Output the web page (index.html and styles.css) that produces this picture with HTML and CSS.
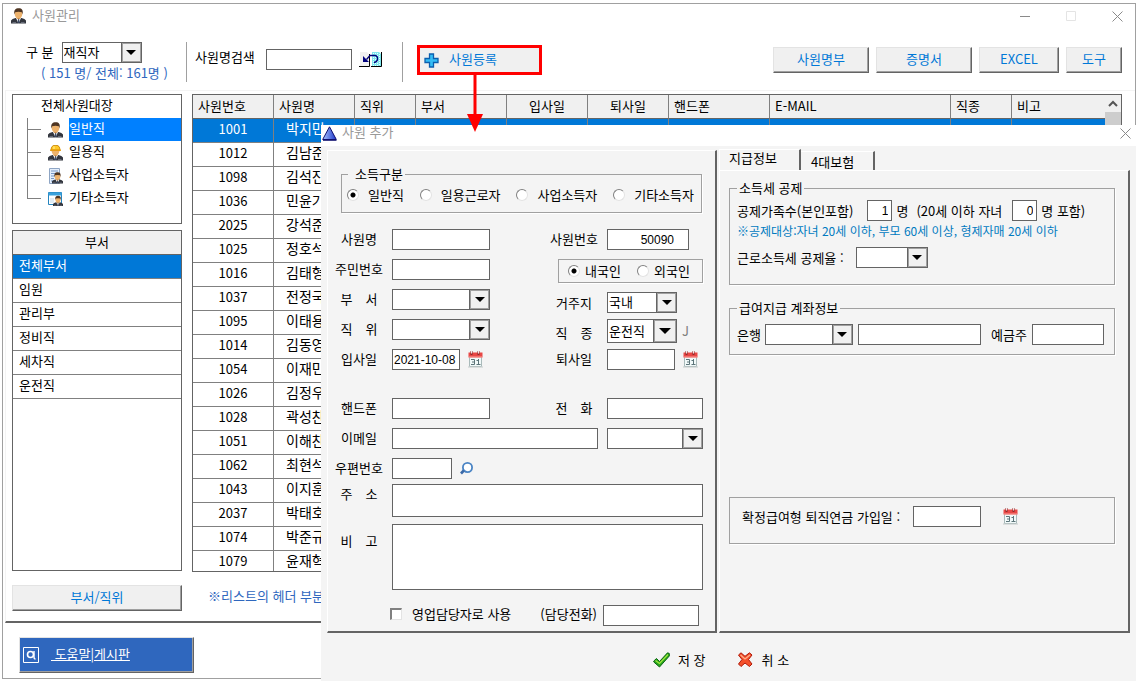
FILE: index.html
```html
<!DOCTYPE html>
<html lang="ko">
<head>
<meta charset="utf-8">
<title>사원관리</title>
<link rel="stylesheet" href="styles.css">
</head>
<body>
<svg class="sprites" aria-hidden="true">
  <symbol id="person" viewBox="0 0 15 16">
    <path d="M0 15.5V12.5Q1 10.8 4.5 10H10.5Q14 10.8 15 12.5V15.5Z" fill="#33363e"/>
    <path d="M5 10H10L7.5 15.5Z" fill="#fff"/>
    <path d="M7 11H8.2L8.6 15H6.6Z" fill="#3d4a66"/>
    <path d="M1.5 14.5H5M10 14.5H13.5" stroke="#666b78"/>
    <ellipse cx="7.5" cy="6" rx="3.8" ry="4.6" fill="#edb26c"/>
    <path d="M3.4 6.5C2.6 2 4.5.3 7.7.3S12.4 2 11.6 6.5L10.8 4.2Q7.5 3.3 4.2 4.2Z" fill="#4e3522"/>
    <path d="M5.5 10H9.5L7.5 11.6Z" fill="#c98b45"/>
  </symbol>
  <symbol id="worker" viewBox="0 0 15 16">
    <use href="#person"/>
    <path d="M3 5Q3 .2 7.5 .2T12 5Z" fill="#ffc928" stroke="#d68b00" stroke-width=".7"/>
    <path d="M2 5.2H13" stroke="#e79c10" stroke-width="1.4"/>
    <path d="M6 1.4V4" stroke="#fff0a0"/>
  </symbol>
  <symbol id="business" viewBox="0 0 15 16">
    <path d="M1.5.5H11.5V15.5H1.5Z" fill="#e4eefb" stroke="#8ea5c4"/>
    <path d="M3 3H10M3 5.5H10M3 8H7M3 10.500H6M3 13H6" stroke="#7797c5"/>
    <svg x="4" y="4" width="11" height="12"><use href="#person" width="11" height="12"/></svg>
  </symbol>
  <symbol id="other" viewBox="0 0 15 16">
    <path d="M.5 1.500H13.500V13.500H.5Z" fill="#fff" stroke="#2484bf"/>
    <path d="M.5 1.500H13.500V4.500H.5Z" fill="#3aa2dd"/>
    <path d="M2 7H6V12H2Z" fill="#e1edf5"/>
    <svg x="5" y="4" width="10" height="12"><use href="#person" width="10" height="12"/></svg>
  </symbol>
  <symbol id="calendar" viewBox="0 0 15 17">
    <path d="M1.500 5H13.500V15.500H1.500Z" fill="#f1f9f9" stroke="#a9baba"/>
    <path d="M.5 1.500H14.500V6.500H.5Z" fill="#e84745"/>
    <path d="M1 6H14" stroke="#f9a19c"/>
    <path d="M3.500 0V4M10.500 0V4" stroke="#8f2a2a" stroke-width="2"/>
    <path d="M3.500 0V2.500M10.500 0V2.500" stroke="#f3e6e6"/>
    <path d="M3 8.500H6.500V13.500H3M4 11H6.500M8.500 9.500H10.500M10.500 8V13.500M8.500 13.500H12.500" fill="none" stroke="#5c7479"/>
    <path d="M0 16H15" stroke="#c3caca"/>
  </symbol>
  <symbol id="close" viewBox="0 0 11 11">
    <path d="M.5 .5L10.500 10.500M10.500 .5L.5 10.500" stroke="#8a8a8a" fill="none"/>
  </symbol>
</svg>

<main class="window">
  <header class="titlebar">
    <svg class="icon-person"><use href="#person"/></svg>
    <h1 class="caption">사원관리</h1>
    <div class="window-controls">
      <button class="ctl" aria-label="최소화"><svg viewBox="0 0 11 11"><path d="M0 5.500H10" stroke="#8a8a8a"/></svg></button>
      <button class="ctl" aria-label="최대화" disabled><svg viewBox="0 0 11 11"><path d="M.5.5H9.500V9.500H.5Z" fill="none" stroke="#e4e4e4"/></svg></button>
      <button class="ctl" aria-label="닫기"><svg><use href="#close"/></svg></button>
    </div>
  </header>

  <div class="toolbar">
    <div class="filter">
      <div class="filter-row">
        <label for="status">구 분</label>
        <span class="combo combo-80"><select id="status"><option>재직자</option></select><i class="drop"></i></span>
      </div>
      <p class="count">( 151 명/ 전체: 161명 )</p>
    </div>
    <div class="search">
      <label for="find">사원명검색</label>
      <input id="find" class="field find-field" type="text">
      <button class="bare" aria-label="검색">
        <svg class="icon-find" viewBox="0 0 24 17">
          <path d="M1 1H8L10 3V15H1Z" fill="#f0f0f0"/><path d="M0 15.500H10.500V3" stroke="#000" fill="none"/>
          <path d="M13 1H20L22 3V15H13Z" fill="#7fe8ee"/><path d="M12 15.500H22.500V1" stroke="#000" fill="none"/>
          <path d="M14.500 2V15M16.500 2V15M18.500 2V15M20.500 3V15" stroke="#e8ffff" stroke-dasharray="1 1"/>
          <path d="M4 5V11H10Z" fill="#00007c"/><path d="M7.500 8.500L11 4.500H16Q19 5 18.500 8.500Q18 11 15 11.500" fill="none" stroke="#00007c" stroke-width="1.300"/>
        </svg>
      </button>
    </div>
    <div class="callout">
      <button class="register">
        <svg class="icon-plus" viewBox="0 0 15 15"><path d="M5.500 1H9.500V5.500H14V9.500H9.500V14H5.500V9.500H1V5.500H5.500Z" fill="#35bdf5" stroke="#0b5fae" stroke-width="1.300"/></svg>
        <span class="register-text">사원등록</span>
      </button>
      <svg class="arrow" viewBox="0 0 16 58" aria-hidden="true"><path d="M8 0V44" stroke="#f00" stroke-width="3"/><path d="M0 40H16L8 58Z" fill="#f00"/></svg>
    </div>
    <div class="actions">
      <button class="btn btn-96">사원명부</button>
      <button class="btn btn-96">증명서</button>
      <button class="btn btn-80">EXCEL</button>
      <button class="btn btn-56">도구</button>
    </div>
  </div>

  <section class="workspace">
    <aside class="side">
      <nav class="tree" aria-label="전체사원대장">
        <p class="tree-title">전체사원대장</p>
        <ul class="tree-list">
          <li><svg><use href="#person"/></svg><a class="selected" href="#">일반직</a></li>
          <li><svg><use href="#worker"/></svg><a href="#">일용직</a></li>
          <li><svg><use href="#business"/></svg><a href="#">사업소득자</a></li>
          <li><svg><use href="#other"/></svg><a href="#">기타소득자</a></li>
        </ul>
      </nav>
      <div class="departments">
        <table class="dept-table">
          <thead><tr><th>부서</th></tr></thead>
          <tbody>
            <tr class="current"><td>전체부서</td></tr>
            <tr><td>임원</td></tr>
            <tr><td>관리부</td></tr>
            <tr><td>정비직</td></tr>
            <tr><td>세차직</td></tr>
            <tr><td>운전직</td></tr>
          </tbody>
        </table>
      </div>
    </aside>

    <div class="list">
      <table class="list-table">
        <colgroup><col class="c81"><col class="c81"><col class="c61"><col class="c91"><col class="c81"><col class="c81"><col class="c101"><col><col class="c61"><col class="c93"></colgroup>
        <thead><tr><th>사원번호</th><th>사원명</th><th>직위</th><th>부서</th><th class="mid">입사일</th><th class="mid">퇴사일</th><th>핸드폰</th><th>E-MAIL</th><th>직종</th><th>비고</th></tr></thead>
        <tbody>
          <tr class="current"><td>1001</td><td>박지민</td><td></td><td></td><td></td><td></td><td></td><td></td><td></td><td></td></tr>
          <tr><td>1012</td><td>김남준</td><td></td><td></td><td></td><td></td><td></td><td></td><td></td><td></td></tr>
          <tr><td>1098</td><td>김석진</td><td></td><td></td><td></td><td></td><td></td><td></td><td></td><td></td></tr>
          <tr><td>1036</td><td>민윤기</td><td></td><td></td><td></td><td></td><td></td><td></td><td></td><td></td></tr>
          <tr><td>2025</td><td>강석준</td><td></td><td></td><td></td><td></td><td></td><td></td><td></td><td></td></tr>
          <tr><td>1025</td><td>정호석</td><td></td><td></td><td></td><td></td><td></td><td></td><td></td><td></td></tr>
          <tr><td>1016</td><td>김태형</td><td></td><td></td><td></td><td></td><td></td><td></td><td></td><td></td></tr>
          <tr><td>1037</td><td>전정국</td><td></td><td></td><td></td><td></td><td></td><td></td><td></td><td></td></tr>
          <tr><td>1095</td><td>이태용</td><td></td><td></td><td></td><td></td><td></td><td></td><td></td><td></td></tr>
          <tr><td>1014</td><td>김동영</td><td></td><td></td><td></td><td></td><td></td><td></td><td></td><td></td></tr>
          <tr><td>1054</td><td>이재민</td><td></td><td></td><td></td><td></td><td></td><td></td><td></td><td></td></tr>
          <tr><td>1026</td><td>김정우</td><td></td><td></td><td></td><td></td><td></td><td></td><td></td><td></td></tr>
          <tr><td>1028</td><td>곽성찬</td><td></td><td></td><td></td><td></td><td></td><td></td><td></td><td></td></tr>
          <tr><td>1051</td><td>이해찬</td><td></td><td></td><td></td><td></td><td></td><td></td><td></td><td></td></tr>
          <tr><td>1062</td><td>최현석</td><td></td><td></td><td></td><td></td><td></td><td></td><td></td><td></td></tr>
          <tr><td>1043</td><td>이지훈</td><td></td><td></td><td></td><td></td><td></td><td></td><td></td><td></td></tr>
          <tr><td>2037</td><td>박태호</td><td></td><td></td><td></td><td></td><td></td><td></td><td></td><td></td></tr>
          <tr><td>1074</td><td>박준규</td><td></td><td></td><td></td><td></td><td></td><td></td><td></td><td></td></tr>
          <tr><td>1079</td><td>윤재혁</td><td></td><td></td><td></td><td></td><td></td><td></td><td></td><td></td></tr>
        </tbody>
      </table>
      <div class="scrollbar">
        <svg viewBox="0 0 16 17"><path d="M4 11L8 7L12 11" fill="none" stroke="#555" stroke-width="2"/></svg>
        <span class="thumb"></span>
      </div>
    </div>

    <button class="btn">부서/직위</button>
    <p class="note">※리스트의 헤더 부분</p>
  </section>

  <footer class="footer">
    <button class="help">
      <svg class="icon-help" viewBox="0 0 16 16"><path d="M.5.5H15.500V15.500H.5Z" fill="none" stroke="#fff"/><circle cx="7.500" cy="7.500" r="3" fill="none" stroke="#fff" stroke-width="1.600"/><path d="M11 4V10Q11 12 12.500 12" fill="none" stroke="#fff" stroke-width="1.400"/></svg>
      <span class="help-text">&nbsp;도움말|게시판</span>
    </button>
  </footer>
</main>

<section class="dialog" role="dialog" aria-labelledby="dialog-title">
  <header class="dialog-title">
    <svg class="icon-app" viewBox="0 0 15 15"><defs><linearGradient id="g"><stop offset="0" stop-color="#a8c4ff"/><stop offset="1" stop-color="#1c35c8"/></linearGradient></defs><path d="M7.500 .8L14.300 13.500H.7Z" fill="url(#g)" stroke="#10106e"/><path d="M1 14.300H14.500" stroke="#10106e"/></svg>
    <h2 class="caption" id="dialog-title">사원 추가</h2>
    <button class="ctl dialog-close" aria-label="닫기"><svg><use href="#close"/></svg></button>
  </header>

  <form class="dialog-body">
    <div class="panel person-panel">
      <fieldset class="group income">
        <legend>소득구분</legend>
        <label><input type="radio" name="income" checked>일반직</label>
        <label><input type="radio" name="income">일용근로자</label>
        <label><input type="radio" name="income">사업소득자</label>
        <label><input type="radio" name="income">기타소득자</label>
      </fieldset>

      <div class="form form-tall">
        <label for="name">사원명</label><input id="name" class="field w98" type="text">
        <label for="no">사원번호</label><input id="no" class="field w82 num" type="text" value="50090">
        <label for="rrn">주민번호</label><input id="rrn" class="field w98" type="text">
        <div class="group nation" role="radiogroup" aria-label="국적">
          <label><input type="radio" name="nation" checked>내국인</label>
          <label><input type="radio" name="nation">외국인</label>
        </div>
        <label for="dept">부　서</label><span class="combo w98"><select id="dept"><option></option></select><i class="drop"></i></span>
        <label class="low" for="res">거주지</label><span class="combo w70 low"><select id="res"><option>국내</option></select><i class="drop"></i></span>
        <label for="rank">직　위</label><span class="combo w98"><select id="rank"><option></option></select><i class="drop"></i></span>
        <label class="low" for="job">직　종</label>
        <span class="inline job"><span class="combo combo-tall w70"><select id="job"><option>운전직</option></select><i class="drop"></i></span><span class="code">J</span></span>
        <label for="in">입사일</label>
        <span class="inline"><input id="in" class="field date" type="text" value="2021-10-08"><button type="button" class="bare" aria-label="입사일 달력"><svg class="icon-cal"><use href="#calendar"/></svg></button></span>
        <label for="out">퇴사일</label>
        <span class="inline"><input id="out" class="field date" type="text"><button type="button" class="bare" aria-label="퇴사일 달력"><svg class="icon-cal"><use href="#calendar"/></svg></button></span>
      </div>

      <div class="form contact">
        <label for="mobile">핸드폰</label><input id="mobile" class="field w98" type="text">
        <label for="tel">전　화</label><input id="tel" class="field" type="text">
        <label for="mail">이메일</label><input id="mail" class="field span2" type="text">
        <span class="combo"><select aria-label="이메일 도메인"><option></option></select><i class="drop"></i></span>
        <label for="zip">우편번호</label>
        <span class="inline span3"><input id="zip" class="field w60" type="text"><button type="button" class="bare" aria-label="우편번호 검색"><svg class="icon-zoom" viewBox="0 0 13 14"><circle cx="7.500" cy="5.500" r="4.600" fill="#fff" stroke="#4a84c4" stroke-width="1.800"/><path d="M3.800 8.500L1 11.500" stroke="#3a69a8" stroke-width="2.600"/></svg></button></span>
      </div>

      <div class="form memo">
        <label for="addr">주　소</label><textarea id="addr" class="field span3 addr"></textarea>
        <label for="etc">비　고</label><textarea id="etc" class="field span3 etc"></textarea>
      </div>

      <div class="sales">
        <label class="check"><input type="checkbox">영업담당자로 사용</label>
        <label for="salestel">(담당전화)</label>
        <input id="salestel" class="field w96" type="text">
      </div>
    </div>

    <div class="pay">
      <div class="tabs" role="tablist">
        <button type="button" class="tab active" role="tab" aria-selected="true">지급정보</button>
        <button type="button" class="tab" role="tab" aria-selected="false">4대보험</button>
      </div>
      <div class="panel pay-panel" role="tabpanel">
        <fieldset class="group tax">
          <legend>소득세 공제</legend>
          <div class="inline family">
            <label for="fam">공제가족수(본인포함)</label><input id="fam" class="field w25 num-right" type="text" value="1"><span>명</span>
            <label class="kids" for="kids">(20세 이하 자녀</label><input id="kids" class="field w25 num-right" type="text" value="0"><span>명 포함)</span>
          </div>
          <p class="hint">※공제대상:자녀 20세 이하, 부모 60세 이상, 형제자매 20세 이하</p>
          <div class="inline rate">
            <label for="rate">근로소득세 공제율 :</label>
            <span class="combo w72"><select id="rate"><option></option></select><i class="drop"></i></span>
          </div>
        </fieldset>

        <fieldset class="group bank">
          <legend>급여지급 계좌정보</legend>
          <div class="inline bank-row">
            <label for="bank">은행</label><span class="combo w88"><select id="bank"><option></option></select><i class="drop"></i></span>
            <input class="field account" type="text" aria-label="계좌번호">
            <label class="holder" for="holder">예금주</label><input id="holder" class="field w72" type="text">
          </div>
        </fieldset>

        <div class="group pension inline">
          <label for="pension">확정급여형 퇴직연금 가입일 :</label>
          <input id="pension" class="field date" type="text">
          <button type="button" class="bare pension-cal" aria-label="가입일 달력"><svg class="icon-cal"><use href="#calendar"/></svg></button>
        </div>
      </div>
    </div>
  </form>

  <footer class="dialog-actions">
    <button class="bare action"><svg class="icon-act" viewBox="0 0 17 16"><path d="M.8 9L3.500 6.500L6.500 9.500L14.500 .8L16.300 1.500V4L6.500 15L.8 10Z" fill="#25a51f" stroke="#0c6411"/><path d="M2.500 8.500L6.500 11.500L15 2.500" fill="none" stroke="#a5e83c" stroke-width="1.200"/></svg>저 장</button>
    <button class="bare action"><svg class="icon-act" viewBox="0 0 17 16"><path d="M1.500 3L4 .8L8 4.300L12.500 .8L15 3L11.500 7.500L15 12L12.500 14.500L8 11L4 14.500L1.500 12L5 7.500Z" fill="#f4502a" stroke="#b01808"/><path d="M3.500 3L8 7L13 3" fill="none" stroke="#ffb08c" stroke-width="1.200"/></svg>취 소</button>
  </footer>
</section>
</body>
</html>
```
FILE: styles.css
```css
:root {
  --line: #646464;
  --shade: #a0a0a0;
  --face: #f0f0f0;
  --dialog: #f4f4f4;
  --blue: #0078d7;
}

* { box-sizing: border-box; }

body {
  margin: 0;
  background: #fff;
  color: #000;
  font: 13px/20px "Noto Sans CJK KR", sans-serif;
}

p, h1, h2, ul { margin: 0; padding: 0; }
ul { list-style: none; }
label, span { white-space: nowrap; }
svg { display: block; flex: none; }
button, input, select, textarea { font: inherit; color: inherit; }
.sprites { position: absolute; width: 0; height: 0; }

/* Shared controls */

.field {
  display: block;
  height: 21px;
  min-width: 0;
  margin: 0;
  padding: 0 3px;
  border: 1px solid var(--line);
  border-radius: 0;
  background: #fff;
  font: 12px/18px "Liberation Sans", "Noto Sans CJK KR", sans-serif;
}

.num { padding-right: 14px; text-align: right; }
.num-right { text-align: right; }
.date { width: 68px; padding: 0 1px; }

.combo { display: grid; height: 21px; }
.combo select, .combo .drop { grid-area: 1 / 1; }
.combo select {
  width: 100%;
  min-width: 0;
  height: 100%;
  padding: 0 20px 2px 1px;
  border: 1px solid var(--line);
  border-radius: 0;
  background: #fff;
  appearance: none;
  line-height: 17px;
}
.combo .drop {
  display: grid;
  place-items: center;
  justify-self: end;
  width: 21px;
  border: 1px solid var(--line);
  background: var(--face);
  box-shadow: inset 0 0 0 1px var(--shade);
  pointer-events: none;
}
.combo .drop::after {
  content: "";
  border: 5px solid transparent;
  border-top-color: #000;
  border-bottom-width: 0;
}
.combo-tall { height: 24px; }
.combo-tall .drop { width: 24px; }
.combo-tall .drop::after { border-width: 6px 6px 0; }
.combo-80 { width: 80px; }

.btn {
  height: 26px;
  padding: 0 0 3px;
  border: 1px solid;
  border-color: #e3e3e3 var(--line) var(--line) #e3e3e3;
  background: var(--face);
  box-shadow: inset -1px -1px 0 var(--shade);
  color: var(--blue);
}
.btn-96 { width: 96px; }
.btn-80 { width: 80px; }
.btn-56 { width: 56px; }

.bare { display: flex; align-items: center; padding: 0; border: 0; background: none; }

.ctl { width: 11px; height: 11px; padding: 0; border: 0; background: none; }
.ctl svg { width: 11px; height: 11px; }

.caption { padding-bottom: 2px; color: #999; font-size: 13px; font-weight: 400; }

.w98 { width: 98px; }
.w96 { width: 96px; }
.w88 { width: 88px; }
.w82 { width: 82px; }
.w72 { width: 72px; }
.w70 { width: 70px; }
.w60 { width: 60px; }
.w25 { width: 25px; }

input[type="radio"] {
  width: 12px;
  height: 12px;
  margin: 0;
  border: 1px solid;
  border-color: #808080 #e3e3e3 #e3e3e3 #808080;
  border-radius: 50%;
  background: #fff;
  appearance: none;
}
input[type="radio"]:checked { background: radial-gradient(circle, #000 2px, #fff 3px); }
input[type="checkbox"] {
  width: 12px;
  height: 12px;
  margin: 0;
  border: solid;
  border-width: 2px 1px 1px 2px;
  border-color: #808080 #e3e3e3 #e3e3e3 #808080;
  background: #fff;
  appearance: none;
}

/* Main window */

.window {
  display: flex;
  flex-direction: column;
  height: calc(100vh - 7px);
  margin: 3px 6px 4px 2px;
  border: 1px solid var(--shade);
}

.titlebar { display: flex; align-items: center; height: 24px; padding: 0 12px 0 8px; }
.icon-person { width: 15px; height: 16px; margin-right: 6px; }
.window-controls { display: flex; gap: 35px; margin-left: auto; }

.toolbar { display: flex; height: 62px; padding: 14px 13px 0 9px; }
.filter { width: 175px; height: 40px; padding-left: 14px; border-right: 1px solid var(--shade); }
.filter-row { display: flex; gap: 8px; }
.count { padding-left: 15px; color: #2f67be; }
.search {
  display: flex;
  align-items: center;
  width: 216px;
  height: 40px;
  padding: 0 0 6px 8px;
  border-right: 1px solid var(--shade);
}
.search label { padding-bottom: 4px; }
.find-field { width: 86px; margin: 0 7px 0 11px; }
.icon-find { width: 24px; height: 17px; }

.callout { position: relative; margin: 3px 0 0 14px; }
.register {
  display: flex;
  align-items: center;
  width: 125px;
  height: 30px;
  padding: 0 4px;
  gap: 10px;
  border: 3px solid #f00;
  background: var(--face);
  color: var(--blue);
}
.register-text { padding-bottom: 3px; }
.icon-plus { width: 15px; height: 15px; }
.arrow { position: absolute; z-index: 2; top: 29px; left: 50px; width: 16px; height: 58px; }
.actions { display: flex; gap: 7px; margin: 5px 0 0 auto; }

.workspace {
  display: grid;
  flex: 1;
  grid-template: minmax(0, 1fr) 26px / 170px minmax(0, 1fr);
  gap: 13px 10px;
  min-height: 0;
  margin-left: 2px;
  padding: 3px 13px 10px 6px;
  border: solid;
  border-width: 1px 0 2px 1px;
  border-color: #f4f4f4 #f4f4f4 var(--line);
}

.side { display: flex; flex-direction: column; gap: 6px; min-height: 0; padding-bottom: 1px; }
.tree { height: 130px; border: 1px solid var(--line); }
.tree-title { padding-left: 28px; }
.tree-list { margin-top: 3px; }
.tree-list li { display: flex; align-items: center; height: 23px; padding-left: 14px; }
.tree-list li::before {
  content: "";
  width: 14px;
  height: 23px;
  margin-right: 7px;
  background:
    linear-gradient(#808080, #808080) 0 0 / 1px 100% no-repeat,
    linear-gradient(#808080, #808080) 0 11px / 14px 1px no-repeat;
}
.tree-list li:last-child::before { background-size: 1px 12px, 14px 1px; }
.tree-list svg { width: 15px; height: 16px; margin-right: 6px; }
.tree-list a { flex: 1; height: 23px; color: #000; line-height: 20px; text-decoration: none; }
.tree-list .selected { background: #0080ff; color: #fff; }

.departments { flex: 1; min-height: 0; border: 1px solid var(--line); }

table { width: 100%; border-collapse: separate; border-spacing: 0; table-layout: fixed; }
th, td {
  height: 24px;
  padding: 0 5px;
  border-bottom: 1px solid #808080;
  font-weight: 400;
  line-height: 20px;
  text-align: left;
  vertical-align: top;
  white-space: nowrap;
}
th { background: var(--face); border-color: var(--line); line-height: 21px; }
.current td { background: var(--blue); color: #fff; }
.dept-table th { text-align: center; }
.dept-table td { padding: 0 6px; }

.list { display: flex; min-height: 0; overflow: hidden; border: 1px solid var(--line); }
.list-table { flex: 1; align-self: flex-start; width: 0; }
.list-table th, .list-table td { border-right: 1px solid #808080; }
.list-table th:last-child, .list-table td:last-child { border-right: 0; }
.list-table .mid, .list-table td:first-child { text-align: center; }
.list-table td:nth-child(2) { padding: 0 0 0 12px; font-size: 14px; }
.list-table td { line-height: 19px; }
.c61 { width: 61px; }
.c81 { width: 81px; }
.c91 { width: 91px; }
.c93 { width: 93px; }
.c101 { width: 101px; }
.scrollbar { display: flex; flex-direction: column; width: 16px; background: var(--face); }
.scrollbar svg { width: 16px; height: 17px; }
.thumb { flex: 1; background: #cdcdcd; }

.note { padding-left: 16px; color: #2f67be; line-height: 21px; }

.footer { padding: 14px 16px 5px; }
.help {
  display: flex;
  align-items: center;
  width: 175px;
  height: 36px;
  padding: 0 3px;
  gap: 12px;
  border: 1px solid;
  border-color: #e3e3e3 var(--line) var(--line) #e3e3e3;
  background: #2f67be;
  box-shadow: inset -1px -1px 0 var(--shade);
  color: #fff;
}
.icon-help { width: 16px; height: 16px; }
.help-text { padding-bottom: 3px; text-decoration: underline; }

/* Employee dialog */

.dialog {
  position: absolute;
  z-index: 1;
  top: 125px;
  right: 6px;
  bottom: 2px;
  left: 321px;
  display: flex;
  flex-direction: column;
  background: var(--dialog);
}
.dialog-title { display: flex; align-items: center; height: 21px; padding: 0 5px 5px 1px; background: #fff; }
.icon-app { width: 15px; height: 15px; margin-right: 5px; }
.dialog-close { margin-left: auto; }
.dialog-body { display: flex; flex: 1; gap: 2px; padding: 3px 6px 0; }

.panel {
  border: solid;
  border-width: 1px 2px 2px 1px;
  border-color: #fff var(--line) var(--line) #fff;
}
.person-panel { width: 390px; margin-top: 1px; padding: 13px 12px 0 7px; }

.group {
  min-width: 0;
  margin: 0;
  border: 1px solid var(--shade);
  box-shadow: 1px 1px 0 #fff;
}
legend { padding: 0 2px; }
.inline { display: flex; align-items: center; }

.income {
  display: flex;
  justify-content: space-between;
  height: 49px;
  margin: 0 1px 0 6px;
  padding: 0 7px 6px 5px;
}
.income label { display: flex; align-items: center; gap: 9px; }
.income legend { margin-left: 1px; padding-left: 7px; }

.form {
  display: grid;
  grid-template-columns: 48px minmax(0, 1fr) 48px 96px;
  column-gap: 9px;
  row-gap: 9px;
  align-items: start;
}
.form > label { text-align: center; }
.form-tall { grid-auto-rows: 24px; row-gap: 6px; margin-top: 16px; }
.contact { grid-auto-rows: 21px; margin-top: 25px; }
.memo { row-gap: 7px; margin-top: 5px; }
.low { align-self: end; }
.span2 { grid-column: span 2; }
.span3 { grid-column: span 3; }
.form .inline { gap: 8px; }
.nation {
  display: flex;
  grid-column: span 2;
  align-items: center;
  justify-content: space-between;
  justify-self: end;
  width: 145px;
  height: 24px;
  padding: 0 12px 0 9px;
}
.nation label { display: flex; align-items: center; gap: 5px; }
.form .job { gap: 5px; }
.code { color: #808080; }
.icon-cal { width: 15px; height: 17px; }
.icon-zoom { width: 13px; height: 14px; }
textarea.field { resize: none; width: 100%; }
.addr { height: 33px; }
.etc { height: 66px; }
.memo label:last-of-type { line-height: 34px; }

.sales { display: flex; align-items: center; margin-top: 14px; padding: 0 4px 0 55px; }
.sales .check { display: flex; align-items: center; gap: 10px; }
.sales label { padding-bottom: 2px; }
.sales label[for] { margin: 0 6px 0 auto; }

.pay { display: flex; flex: 1; flex-direction: column; min-width: 0; }
.tabs { display: flex; align-items: flex-end; height: 21px; }
.tab {
  width: 74px;
  height: 19px;
  padding: 0 0 0 10px;
  border: solid;
  border-width: 1px 2px 0 0;
  border-color: #fff var(--line) #fff #fff;
  background: var(--dialog);
  line-height: 15px;
  text-align: left;
}
.active { width: 82px; height: 22px; margin-bottom: -1px; padding: 0 0 6px 9px; border-left-width: 1px; }
.pay-panel { display: flex; flex: 1; flex-direction: column; padding: 7px 13px 0 9px; }

.tax { height: 107px; padding: 0 7px; }
.family { gap: 4px; margin-top: 2px; }
.family label { margin-right: 10px; }
.family .kids { margin: 0 6px 0 4px; }
.hint { color: #007ac0; font-size: 12px; }
.rate { gap: 12px; margin-top: 6px; }

.bank { height: 57px; margin-top: 13px; padding: 0 10px 0 7px; }
.bank-row { gap: 5px; margin-top: 6px; }
.bank-row label { margin-right: -1px; }
.account { flex: 1; }
.bank-row .holder { margin: 0 0 0 5px; }

.pension { gap: 13px; height: 47px; margin-top: 142px; padding: 0 12px 8px; }
.pension-cal { margin-left: 9px; }

.dialog-actions { display: flex; gap: 31px; height: 48px; padding: 6px 0 0 332px; }
.action { gap: 8px; }
.icon-act { width: 17px; height: 16px; }
```
